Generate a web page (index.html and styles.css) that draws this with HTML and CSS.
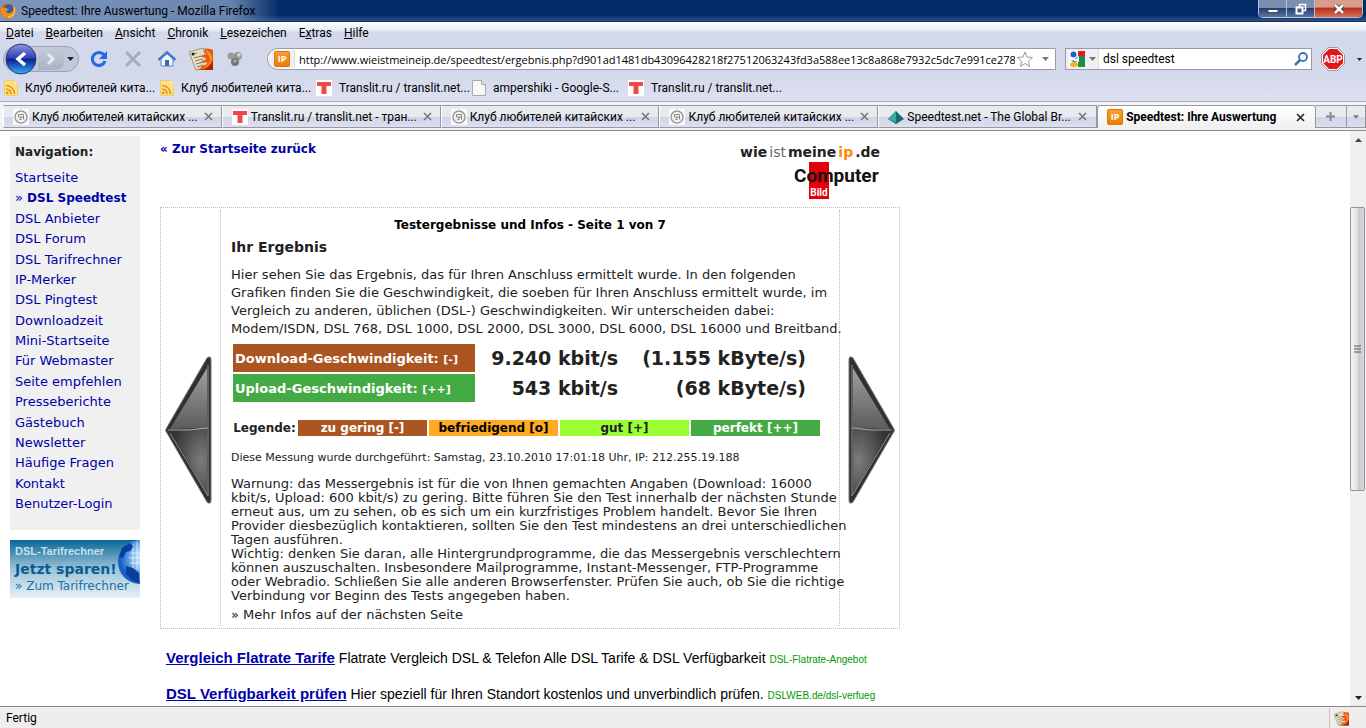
FILE: index.html
```html
<!DOCTYPE html>
<html lang="de">
<head>
  <meta charset="UTF-8">
  <meta name="viewport" content="width=device-width, initial-scale=1.0">
  <title>Speedtest: Ihre Auswertung</title>
  <link rel="stylesheet" href="styles.css">
</head>
<body>

  <!-- shared icons -->
  <svg class="defs" aria-hidden="true">
    <defs>
      <linearGradient id="backFill" x1="0" y1="0" x2="0" y2="1">
        <stop offset="0" stop-color="#8a97dc"/><stop offset=".48" stop-color="#2b3fb0"/>
        <stop offset=".5" stop-color="#0a1a8c"/><stop offset="1" stop-color="#35b4f4"/>
      </linearGradient>
      <linearGradient id="arrowTop" x1="0" y1="0" x2="0" y2="1">
        <stop offset="0" stop-color="#a0a0a0"/><stop offset="1" stop-color="#5c5c5c"/>
      </linearGradient>
      <radialGradient id="arrowBottom" cx=".85" cy=".5" r=".8">
        <stop offset="0" stop-color="#7c7c7c"/><stop offset="1" stop-color="#343434"/>
      </radialGradient>
      <radialGradient id="globe" cx=".65" cy=".4" r=".6">
        <stop offset="0" stop-color="#ffffff"/><stop offset=".5" stop-color="#8cc4f4"/><stop offset="1" stop-color="#1460c8"/>
      </radialGradient>
      <linearGradient id="ipFill" x1="0" y1="0" x2="0" y2="1">
        <stop offset="0" stop-color="#f8a030"/><stop offset="1" stop-color="#ee7c00"/>
      </linearGradient>
    </defs>
    <symbol id="i-rss" viewBox="0 0 14 16">
      <path d="M.5.5h10l3 3v12H.5z" fill="#fbe08a" stroke="#eccb68"/>
      <path d="M10.500.500v3h3z" fill="#fff4c8"/>
      <g fill="none" stroke="#e8940c" stroke-width="1.700"><path d="M2 5.500a8.500 8.500 0 0 1 8.500 8.500M2 9a5 5 0 0 1 5 5"/></g>
      <circle cx="3.200" cy="12.800" r="1.400" fill="#e8940c"/>
    </symbol>
    <symbol id="i-t" viewBox="0 0 16 16">
      <path d="M0 0h16v16H0z" fill="#fff"/><path d="M1 2h14v4h-4.500v8h-5V6H1z" fill="#f24848"/>
    </symbol>
    <symbol id="i-page" viewBox="0 0 14 16">
      <path d="M.5.5h9l4 4v11H.5z" fill="#f8f8f8" stroke="#a8a8a8"/><path d="M9.500.500v4h4" fill="#e4e4e4" stroke="#a8a8a8"/>
    </symbol>
    <symbol id="i-club" viewBox="0 0 16 16">
      <path d="M0 0h16v16H0z" fill="#fafafa"/>
      <circle cx="8" cy="8" r="6" fill="#f4f4f4" stroke="#999" stroke-width="1.500"/>
      <path d="M5.500 8V5.500h5v5M5.500 8h5M8 8v3M6 11l2-1" fill="none" stroke="#888"/>
    </symbol>
    <symbol id="i-ip" viewBox="0 0 16 16">
      <rect x=".5" y=".5" width="15" height="15" rx="1" fill="url(#ipFill)" stroke="#d97a10"/>
      <text x="8" y="11" text-anchor="middle" class="ip-text">IP</text>
    </symbol>
    <symbol id="i-x" viewBox="0 0 9 9"><path d="M1 1l7 7M8 1L1 8" stroke="currentColor" stroke-width="1.600"/></symbol>
    <symbol id="i-down" viewBox="0 0 7 4"><path d="M0 0h7L3.500 4z" fill="currentColor"/></symbol>
    <symbol id="i-fox" viewBox="0 0 24 24">
      <path d="M0 5L14 1l6 20-13 2z" fill="#e6dfc4" stroke="#a0957a"/>
      <path d="M4 7l4-1M5 11l8-2M6 14l8-2M7 17l8-2M8 20l7-2" stroke="#857a60"/>
      <circle cx="4" cy="7" r="1.500" fill="#222"/>
      <path d="M15 1c2 1 6 0 9 2v20H7c3 0 5-2 6-4 3 0 5-2 6-4-2 1-5 1-7-1 3 0 4-2 6-2-1-2-5-1-6-3 2-2 4 0 5-2-2-2-2-4-1-6z" fill="#e8590f"/>
      <path d="M17 2c2 3 6 4 6 9s-4 11-13 12c6-2 10-5 11-10 0-4-4-6-4-11z" fill="#fb9426"/>
      <path d="M9 23c7 0 13-4 15-10v10z" fill="#b3200c"/>
    </symbol>
    <symbol id="i-arrow" viewBox="0 0 47 148">
      <path d="M1 73L42 2Q46-1 46 4V144Q46 149 42 146L2 77Q0 75 1 73z" fill="#303030" stroke="#777"/>
      <path d="M5 73L42 12V72z" fill="url(#arrowTop)"/>
      <path d="M5 74L42 72V138z" fill="url(#arrowBottom)"/>
      <path d="M3 74q20 1 40-2" fill="none" stroke="#aaa"/>
      <path d="M5 77L43 140V9" fill="none" stroke="#909090"/>
    </symbol>
  </svg>

  <header class="titlebar">
    <svg class="app-icon" viewBox="0 0 16 16"><circle cx="8" cy="8" r="7.500" fill="#e45f0b"/><circle cx="8.500" cy="6.500" r="5" fill="#2c63ae"/><path d="M1 4c2 1 3 0 5 1l3 2-3 1c1 3 4 3 7 0l1-5c3 6 0 12-6 12S0 10 1 4z" fill="#f28a17"/><path d="M14 4c2 6-1 10-6 10" fill="none" stroke="#fbc63c" stroke-width="1.500"/></svg>
    <span class="title">Speedtest: Ihre Auswertung - Mozilla Firefox</span>
    <div class="window-buttons">
      <button class="win" aria-label="Minimieren"><svg width="12" height="10"><path d="M1 5.500h10v3H1z" fill="#fff" stroke="#445"/></svg></button>
      <button class="win" aria-label="Wiederherstellen"><svg width="12" height="12"><path d="M4.500 1.500h6v6h-6z" fill="none" stroke="#fff" stroke-width="1.500"/><path d="M1.500 4.500h6v6h-6z" fill="#445f8c" stroke="#fff" stroke-width="2"/></svg></button>
      <button class="win close" aria-label="Schließen"><svg width="12" height="10"><path d="M2 1l8 8M10 1L2 9" stroke="#432" stroke-width="4"/><path d="M2 1l8 8M10 1L2 9" stroke="#fff" stroke-width="2.500"/></svg></button>
    </div>
  </header>

  <nav class="menubar">
    <a href="#"><u>D</u>atei</a>
    <a href="#"><u>B</u>earbeiten</a>
    <a href="#"><u>A</u>nsicht</a>
    <a href="#"><u>C</u>hronik</a>
    <a href="#"><u>L</u>esezeichen</a>
    <a href="#">E<u>x</u>tras</a>
    <a href="#"><u>H</u>ilfe</a>
  </nav>

  <div class="toolbar">
    <div class="history">
      <button class="back" aria-label="Zurück"><svg width="32" height="32"><circle cx="16" cy="16" r="15" fill="url(#backFill)" stroke="#26357c"/><path d="M20 10l-7 6 7 6" fill="none" stroke="#fff" stroke-width="3.500"/></svg></button>
      <button class="forward" aria-label="Vor"><svg width="12" height="14"><path d="M3 2l5 5-5 5" fill="none" stroke="#e4e8f2" stroke-width="3"/></svg></button>
      <button class="recent" aria-label="Verlauf"><svg width="7" height="4"><use href="#i-down"/></svg></button>
    </div>
    <div class="tools">
      <button class="tool" aria-label="Neu laden"><svg width="18" height="18"><path d="M14 5A6.500 6.500 0 1 0 15 11" fill="none" stroke="#1d6ce0" stroke-width="3"/><path d="M17 1v8H9z" fill="#1d6ce0"/></svg></button>
      <button class="tool" aria-label="Stopp"><svg width="18" height="18"><path d="M2 2l14 14M16 2L2 16" stroke="#a9adb8" stroke-width="3"/></svg></button>
      <button class="tool" aria-label="Startseite"><svg width="20" height="20"><path d="M4 10v7h12v-7l-6-6z" fill="#f3f7fd" stroke="#5b82c4"/><path d="M1.500 11L10 3.500l8.500 7.500" fill="none" stroke="#3f78d0" stroke-width="2.500"/><path d="M8 11h4v6H8z" fill="#3a68b4"/></svg></button>
      <button class="tool" aria-label="Erweiterung"><svg width="24" height="24"><use href="#i-fox"/></svg></button>
      <button class="tool" aria-label="Kugeln"><svg width="18" height="18"><circle cx="5" cy="6" r="3.500" fill="#9b9b9b"/><circle cx="12" cy="6" r="4" fill="#929292"/><circle cx="9" cy="12" r="4" fill="#777"/><circle cx="13" cy="5" r="2" fill="#d4d4d4"/><circle cx="9" cy="11" r="1.500" fill="#b0b0b0"/></svg></button>
    </div>
    <div class="urlbar">
      <span class="identity"><svg width="16" height="16"><use href="#i-ip"/></svg></span>
      <input type="text" aria-label="Adresse" value="http://www.wieistmeineip.de/speedtest/ergebnis.php?d901ad1481db43096428218f27512063243fd3a588ee13c8a868e7932c5dc7e991ce2784">
      <button aria-label="Lesezeichen setzen"><svg width="16" height="16"><path d="M8 1l2 5 5.500.500-4 3.500 1 5.500L8 12.500 3.500 15.500l1-5.500-4-3.500L6 6z" fill="#fff" stroke="#999"/></svg></button>
      <button class="grey" aria-label="Adressliste"><svg width="7" height="4"><use href="#i-down"/></svg></button>
    </div>
    <div class="searchbar">
      <button class="engine grey" aria-label="Suchmaschine"><svg width="16" height="16"><path d="M0 0h16v16H0z" fill="#fff"/><path d="M9 0h7v5H9z" fill="#e21b1b"/><path d="M9 5h7v11H9z" fill="#169340"/><circle cx="4.500" cy="3.500" r="3" fill="#1e62c8"/><path d="M0 9q4 2 5-1l5-3v6H5z" fill="#1e62c8"/><path d="M3 6l4 2 3-3v6l-5-1z" fill="#fff"/><ellipse cx="5" cy="13.500" rx="4" ry="2.500" fill="#eeb21a"/></svg><svg width="7" height="4"><use href="#i-down"/></svg></button>
      <input type="text" aria-label="Suche" value="dsl speedtest">
      <button aria-label="Suchen"><svg width="14" height="14"><circle cx="9" cy="5" r="4" fill="#fff" stroke="#3a74b8" stroke-width="1.800"/><path d="M6 8l-5 5" stroke="#3a74b8" stroke-width="2.500"/></svg></button>
    </div>
    <button class="abp" aria-label="Adblock Plus"><svg width="24" height="24"><path d="M7.500.500h9l7 7v9l-7 7h-9l-7-7v-9z" fill="#fff" stroke="#999"/><path d="M8 2h8l6 6v8l-6 6H8l-6-6V8z" fill="#e4141c"/><text x="12" y="16" text-anchor="middle" class="abp-text">ABP</text></svg></button>
    <button class="abp-menu" aria-label="Adblock Menü"><svg width="5" height="3"><use href="#i-down"/></svg></button>
  </div>

  <nav class="bookmarks">
    <a href="#"><svg width="14" height="16"><use href="#i-rss"/></svg>Клуб любителей кита...</a>
    <a href="#"><svg width="14" height="16"><use href="#i-rss"/></svg>Клуб любителей кита...</a>
    <a href="#"><svg width="16" height="16"><use href="#i-t"/></svg>Translit.ru / translit.net...</a>
    <a href="#"><svg width="14" height="16"><use href="#i-page"/></svg>ampershiki - Google-S...</a>
    <a href="#"><svg width="16" height="16"><use href="#i-t"/></svg>Translit.ru / translit.net...</a>
  </nav>

  <div class="tabs">
    <div class="tab"><svg width="16" height="16"><use href="#i-club"/></svg><span>Клуб любителей китайских ...</span><button aria-label="Tab schließen"><svg width="9" height="9"><use href="#i-x"/></svg></button></div>
    <div class="tab"><svg width="16" height="16"><use href="#i-t"/></svg><span>Translit.ru / translit.net - тран...</span><button aria-label="Tab schließen"><svg width="9" height="9"><use href="#i-x"/></svg></button></div>
    <div class="tab"><svg width="16" height="16"><use href="#i-club"/></svg><span>Клуб любителей китайских ...</span><button aria-label="Tab schließen"><svg width="9" height="9"><use href="#i-x"/></svg></button></div>
    <div class="tab"><svg width="16" height="16"><use href="#i-club"/></svg><span>Клуб любителей китайских ...</span><button aria-label="Tab schließen"><svg width="9" height="9"><use href="#i-x"/></svg></button></div>
    <div class="tab"><svg width="16" height="16"><path d="M8 2l8 8-8 4-8-4z" fill="#126e6c"/><path d="M8 2v12l-8-4z" fill="#36a8a0"/><path d="M0 10l8 4 8-4-8 5z" fill="#0a4644"/></svg><span>Speedtest.net - The Global Br...</span><button aria-label="Tab schließen"><svg width="9" height="9"><use href="#i-x"/></svg></button></div>
    <div class="tab active"><svg width="16" height="16"><use href="#i-ip"/></svg><span>Speedtest: Ihre Auswertung</span><button aria-label="Tab schließen"><svg width="9" height="9"><use href="#i-x"/></svg></button></div>
    <button class="tab-button" aria-label="Neuer Tab"><svg width="9" height="9"><path d="M4.500 0v9M0 4.500h9" stroke="#888" stroke-width="2"/></svg></button>
    <button class="tab-button list" aria-label="Alle Tabs"><svg width="6" height="4"><use href="#i-down"/></svg></button>
  </div>

  <div class="viewport">
    <div class="page">
      <aside>
        <nav class="navigation">
          <h2>Navigation:</h2>
          <ul>
            <li><a href="#">Startseite</a></li>
            <li><a href="#">» <b>DSL Speedtest</b></a></li>
            <li><a href="#">DSL Anbieter</a></li>
            <li><a href="#">DSL Forum</a></li>
            <li><a href="#">DSL Tarifrechner</a></li>
            <li><a href="#">IP-Merker</a></li>
            <li><a href="#">DSL Pingtest</a></li>
            <li><a href="#">Downloadzeit</a></li>
            <li><a href="#">Mini-Startseite</a></li>
            <li><a href="#">Für Webmaster</a></li>
            <li><a href="#">Seite empfehlen</a></li>
            <li><a href="#">Presseberichte</a></li>
            <li><a href="#">Gästebuch</a></li>
            <li><a href="#">Newsletter</a></li>
            <li><a href="#">Häufige Fragen</a></li>
            <li><a href="#">Kontakt</a></li>
            <li><a href="#">Benutzer-Login</a></li>
          </ul>
        </nav>
        <a href="#" class="banner">
          <svg class="globe" width="22" height="46"><circle cx="22" cy="22" r="22" fill="url(#globe)"/><path d="M4 8l8-5 4 3-4 5-4 1-3 6-4-1zM8 26l7 2 6 5v10l-6-2-7-7z" fill="#0a3e9c"/><path d="M12 13h10M11 18h11M12 23h10M15 4v24M19 2v28" stroke="#fff" stroke-opacity=".6"/></svg>
          <span class="banner-small">DSL-Tarifrechner</span>
          <strong>Jetzt sparen!</strong>
          <span class="banner-link">» Zum Tarifrechner</span>
        </a>
      </aside>

      <main>
        <div class="top">
          <a href="#" class="home-link">« Zur Startseite zurück</a>
          <div class="logos">
            <div class="logo"><b>wie</b><span>ist</span><b>meine</b><i>ip</i><b>.de</b></div>
            <svg class="computerbild" width="86" height="38" role="img" aria-label="Computer Bild">
              <path d="M15 0h20v37H15z" fill="#e3000b"/>
              <text x="0" y="20" class="cb-computer">Computer</text>
              <text x="25" y="34" text-anchor="middle" class="cb-bild">Bild</text>
            </svg>
          </div>
        </div>

        <div class="result">
          <a href="#" class="pager" aria-label="Vorherige Seite"><svg width="47" height="148"><use href="#i-arrow"/></svg></a>
          <section class="content">
            <h3>Testergebnisse und Infos - Seite 1 von 7</h3>
            <h1>Ihr Ergebnis</h1>
            <p class="intro">Hier sehen Sie das Ergebnis, das für Ihren Anschluss ermittelt wurde. In den folgenden<br>
              Grafiken finden Sie die Geschwindigkeit, die soeben für Ihren Anschluss ermittelt wurde, im<br>
              Vergleich zu anderen, üblichen (DSL-) Geschwindigkeiten. Wir unterscheiden dabei:<br>
              Modem/ISDN, DSL 768, DSL 1000, DSL 2000, DSL 3000, DSL 6000, DSL 16000 und Breitband.</p>
            <table class="speeds">
              <tr>
                <th scope="row" class="low">Download-Geschwindigkeit: <small>[-]</small></th>
                <td class="kbit">9.240 kbit/s</td>
                <td class="kbyte">(1.155 kByte/s)</td>
              </tr>
              <tr>
                <th scope="row" class="perfect">Upload-Geschwindigkeit: <small>[++]</small></th>
                <td class="kbit">543 kbit/s</td>
                <td class="kbyte">(68 kByte/s)</td>
              </tr>
            </table>
            <table class="legend">
              <tr>
                <th scope="row">Legende:</th>
                <td class="low">zu gering [-]</td>
                <td class="fair">befriedigend [o]</td>
                <td class="good">gut [+]</td>
                <td class="perfect">perfekt [++]</td>
              </tr>
            </table>
            <p class="measured">Diese Messung wurde durchgeführt: Samstag, 23.10.2010 17:01:18 Uhr, IP: 212.255.19.188</p>
            <p class="warning">Warnung: das Messergebnis ist für die von Ihnen gemachten Angaben (Download: 16000<br>
              kbit/s, Upload: 600 kbit/s) zu gering. Bitte führen Sie den Test innerhalb der nächsten Stunde<br>
              erneut aus, um zu sehen, ob es sich um ein kurzfristiges Problem handelt. Bevor Sie Ihren<br>
              Provider diesbezüglich kontaktieren, sollten Sie den Test mindestens an drei unterschiedlichen<br>
              Tagen ausführen.<br>
              Wichtig: denken Sie daran, alle Hintergrundprogramme, die das Messergebnis verschlechtern<br>
              können auszuschalten. Insbesondere Mailprogramme, Instant-Messenger, FTP-Programme<br>
              oder Webradio. Schließen Sie alle anderen Browserfenster. Prüfen Sie auch, ob Sie die richtige<br>
              Verbindung vor Beginn des Tests angegeben haben.</p>
            <p class="more">» Mehr Infos auf der nächsten Seite</p>
          </section>
          <a href="#" class="pager next" aria-label="Nächste Seite"><svg width="47" height="148"><use href="#i-arrow"/></svg></a>
        </div>

        <div class="ads">
          <p><a href="#">Vergleich Flatrate Tarife</a> Flatrate Vergleich DSL &amp; Telefon Alle DSL Tarife &amp; DSL Verfügbarkeit <span>DSL-Flatrate-Angebot</span></p>
          <p><a href="#">DSL Verfügbarkeit prüfen</a> Hier speziell für Ihren Standort kostenlos und unverbindlich prüfen. <span>DSLWEB.de/dsl-verfueg</span></p>
        </div>
      </main>
    </div>

    <div class="scrollbar">
      <button aria-label="Nach oben"><svg width="7" height="4"><path d="M0 4h7L3.500 0z" fill="#444"/></svg></button>
      <div class="track"><div class="thumb"><svg width="8" height="8"><path d="M0 1h7M0 4h7M0 7h7" stroke="#555"/></svg></div></div>
      <button aria-label="Nach unten"><svg width="7" height="4"><use href="#i-down"/></svg></button>
    </div>
  </div>

  <footer class="statusbar">
    <span>Fertig</span>
    <div class="status-icon"><svg width="15" height="15"><use href="#i-fox"/></svg></div>
  </footer>

</body>
</html>
```
FILE: styles.css
```css
* {
  box-sizing: border-box;
}

body {
  margin: 0;
  height: 100vh;
  display: flex;
  flex-direction: column;
  overflow: hidden;
  font-family: Roboto, "Noto Sans", sans-serif;
  font-size: 12px;
  color: #000;
  background-color: #d3d8ea;
}

button {
  display: flex;
  align-items: center;
  justify-content: center;
  padding: 0;
  border: none;
  background: none;
  color: #222;
}

input {
  flex: 1;
  min-width: 0;
  padding: 0;
  border: none;
  outline: none;
  background: none;
  font: inherit;
  color: #000;
}

svg {
  display: block;
  flex: none;
}

.defs {
  position: absolute;
  width: 0;
  height: 0;
}

/* title bar */
.titlebar {
  flex: none;
  height: 22px;
  display: flex;
  align-items: flex-start;
  border-bottom: 1px solid #1c2f50;
  background: linear-gradient(90deg, #7f97bd 0, #6a84b0 230px, rgba(0, 42, 102, 0) 280px), linear-gradient(#012a66 70%, #2c5290);
}

.app-icon {
  width: 16px;
  height: 16px;
  margin-top: 3px;
}

.title {
  margin-left: 5px;
  line-height: 22px;
}

.window-buttons {
  display: flex;
  margin: 0 3px 0 auto;
  height: 18px;
  border: 1px solid #b5c0d4;
  border-top: none;
  border-radius: 0 0 5px 5px;
  overflow: hidden;
}

.win {
  width: 28px;
  border-right: 1px solid #b5c0d4;
  background: linear-gradient(#7d8fae 45%, #24406e 50%, #5a75a2);
}

.win.close {
  width: 47px;
  border-right: none;
  background: linear-gradient(#d89c8c 40%, #b8301a 50%, #d8705a);
}

/* menu, toolbar and bookmarks */
.menubar {
  flex: none;
  height: 21px;
  display: flex;
  align-items: center;
  gap: 12px;
  padding-left: 6px;
  background: linear-gradient(#ffffff, #e2e8f4 9px, #d3d8ea 10px);
}

.menubar a,
.bookmarks a {
  color: #000;
  text-decoration: none;
  white-space: nowrap;
}

.toolbar {
  flex: none;
  height: 32px;
  display: flex;
  align-items: center;
  padding: 0 3px;
}

.history {
  display: flex;
  align-items: center;
  width: 76px;
  height: 26px;
  border: 1px solid #9ba3b8;
  border-radius: 13px;
  background-color: #c2c8d8;
}

.back {
  width: 34px;
  height: 32px;
  flex: none;
}

.forward {
  width: 26px;
  height: 22px;
  border-radius: 0 8px 8px 0;
  background: linear-gradient(#c4cad8, #aab2c4);
}

.recent {
  width: 12px;
}

.tools {
  display: flex;
  margin-left: 3px;
}

.tool {
  width: 34px;
}

.urlbar,
.searchbar {
  display: flex;
  align-items: center;
  height: 22px;
  border: 1px solid #989ca8;
  background-color: #fff;
}

.urlbar {
  flex: 1;
  margin-left: 15px;
  border-radius: 11px 0 0 11px;
}

.urlbar input {
  font-family: "Open Sans", "Noto Sans", sans-serif;
  font-size: 11px;
}

.urlbar button {
  width: 20px;
}

.identity {
  padding: 1px 4px 1px 6px;
  margin-right: 4px;
  border-right: 1px solid #ddd;
  border-radius: 11px 0 0 11px;
  background-color: #f0f0f4;
}

.grey {
  color: #777;
}

.searchbar {
  width: 247px;
  margin-left: 9px;
}

.engine {
  gap: 4px;
  width: 33px;
  height: 20px;
  margin-right: 4px;
  border-right: 1px solid #ddd;
  background-color: #f0f0f4;
}

.searchbar button:last-child {
  width: 20px;
}

.abp {
  margin-left: 9px;
}

.abp-menu {
  width: 18px;
  padding-left: 11px;
}

.ip-text {
  font: bold 9px "Open Sans", sans-serif;
  fill: #fff;
}

.abp-text {
  font: bold 10px Roboto, sans-serif;
  fill: #fff;
}

.bookmarks {
  flex: none;
  height: 27px;
  display: flex;
  align-items: center;
  padding-left: 4px;
  border-bottom: 1px solid #a8adba;
  background: linear-gradient(#d3d8ea, #dde1f2);
}

.bookmarks a {
  display: flex;
  align-items: center;
  gap: 7px;
  width: 156px;
}

/* tabs */
.tabs {
  flex: none;
  height: 29px;
  display: flex;
  align-items: flex-start;
  padding: 3px 0 0 3px;
  border-bottom: 1px solid #888;
  background: linear-gradient(#f4f4f7 25px, #f0f0f0 25px);
}

.tab {
  flex: 1;
  min-width: 0;
  height: 23px;
  display: flex;
  align-items: center;
  padding: 0 5px 0 9px;
  gap: 3px;
  border: 1px solid #98999d;
  border-left-color: #fff;
  background: linear-gradient(#e9eaf0 50%, #cfd5e8 55%, #dce0f0);
  white-space: nowrap;
}

.tab span {
  flex: 1;
}

.tab button {
  width: 18px;
  color: #777;
}

.tab.active {
  border-color: #98999d;
  border-bottom: none;
  border-radius: 3px 3px 0 0;
  background: linear-gradient(#ffffff, #f0f0f0);
  font-weight: bold;
}

.tab.active button {
  color: #222;
}

.tab-button {
  width: 31px;
  height: 23px;
  border: 1px solid #98999d;
  border-left: none;
  background: linear-gradient(#e9eaf0 50%, #cfd5e8 55%, #dce0f0);
}

.tab-button.list {
  width: 19px;
  color: #777;
}

/* page */
.viewport {
  flex: 1;
  min-height: 0;
  display: flex;
  background-color: #fff;
}

.page {
  flex: 1;
  display: flex;
  gap: 20px;
  padding: 5px 10px 0;
  overflow: hidden;
  font-family: Verdana, "DejaVu Sans", sans-serif;
  font-size: 13px;
  color: #222;
}

.page a {
  color: #0000aa;
  text-decoration: none;
}

aside {
  flex: none;
  width: 130px;
}

.navigation {
  display: flex;
  flex-direction: column;
  height: 394px;
  padding: 7px 5px 17px;
  background-color: #f0f0f0;
  white-space: nowrap;
}

.navigation h2 {
  margin: 0 0 8px;
  font-size: 12px;
  line-height: 18px;
}

.navigation ul {
  flex: 1;
  display: flex;
  flex-direction: column;
  justify-content: space-between;
  margin: 0;
  padding: 0;
  list-style: none;
  line-height: 18px;
}

.navigation b {
  font-size: 12px;
}

.banner {
  position: relative;
  display: flex;
  flex-direction: column;
  height: 58px;
  margin-top: 10px;
  padding: 3px 5px;
  overflow: hidden;
  white-space: nowrap;
  background: linear-gradient(#0a6698, #9cc4d8 50%, #e8f0f5);
}

.banner .globe {
  position: absolute;
  right: 0;
  top: 0;
}

.banner-small {
  font: bold 11px/16px "Liberation Sans", Arial, sans-serif;
  color: #c4e0ee;
}

.banner strong {
  font-size: 14px;
  line-height: 20px;
  color: #0a5c94;
}

.banner .banner-link {
  font-size: 12px;
  line-height: 14px;
  color: #1a6ea8;
}

main {
  width: 740px;
}

.top {
  display: flex;
  justify-content: space-between;
  height: 71px;
  padding: 3px 20px 0 0;
}

.home-link {
  font-size: 12px;
  font-weight: bold;
  line-height: 20px;
}

.logos {
  display: flex;
  flex-direction: column;
  align-items: flex-end;
  padding-top: 3px;
}

.logo {
  display: flex;
  gap: 2px;
  font-family: "DejaVu Sans", sans-serif;
  font-size: 14px;
  line-height: 20px;
}

.logo span {
  color: #666;
}

.logo i {
  font-style: normal;
  font-weight: bold;
  color: #f80;
}

.cb-computer {
  font: bold 19px Roboto, sans-serif;
  fill: #111;
}

.cb-bild {
  font: bold 10px Roboto, sans-serif;
  fill: #fff;
}

.result {
  display: flex;
  height: 422px;
  padding: 2px 0;
  border: 1px dotted #bbb;
}

.pager {
  flex: 1;
  display: flex;
  align-items: center;
  padding: 24px 4px 0;
}

.pager.next {
  justify-content: flex-end;
}

.pager.next svg {
  transform: scaleX(-1);
}

.content {
  width: 620px;
  padding: 6px 10px 0;
  border: 1px dotted #bbb;
  border-width: 0 1px;
  white-space: nowrap;
}

.content h3 {
  margin: 0;
  font-size: 12px;
  line-height: 18px;
  text-align: center;
  color: #000;
}

.content h1 {
  margin: 4px 0 10px;
  font-size: 14px;
  line-height: 18px;
}

.content p {
  margin: 0;
}

.intro {
  line-height: 18px;
}

.speeds,
.legend {
  border-spacing: 2px;
}

.speeds {
  margin-top: 4px;
}

.speeds th {
  width: 242px;
  height: 28px;
  padding: 0 2px;
  text-align: left;
  font-size: 13px;
}

.speeds small {
  font-size: 11px;
}

.speeds td {
  padding: 0;
  font-size: 19px;
  line-height: 22px;
  font-weight: bold;
  text-align: right;
}

.kbit {
  width: 141px;
}

.kbyte {
  width: 186px;
}

.low {
  background-color: #aa5522;
  color: #fff;
}

.fair {
  background-color: #ffaa22;
  color: #000;
}

.good {
  background-color: #99ff33;
  color: #222;
}

.perfect {
  background-color: #44aa44;
  color: #fff;
}

.legend {
  margin-top: 14px;
  font-size: 12px;
  font-weight: bold;
  line-height: 16px;
  text-align: center;
}

.legend th {
  width: 63px;
  padding: 0;
}

.legend td {
  width: 129px;
  padding: 0;
}

.content .measured {
  margin: 11px 0 10px;
  font-size: 11px;
  line-height: 18px;
}

.warning {
  line-height: 14px;
}

.more {
  line-height: 24px;
}

.ads {
  width: 723px;
  padding: 19px 0 0 6px;
  font-family: "Liberation Sans", Arial, sans-serif;
  font-size: 14px;
  color: #000;
}

.ads p {
  margin: 0 0 16px;
  line-height: 20px;
  white-space: nowrap;
}

.ads a {
  font-size: 15px;
  font-weight: bold;
  line-height: 16px;
  text-decoration: underline;
}

.ads span {
  font-size: 10px;
  line-height: 16px;
  color: #009900;
}

/* scrollbar */
.scrollbar {
  flex: none;
  width: 16px;
  display: flex;
  flex-direction: column;
  background-color: #efefef;
}

.scrollbar button {
  height: 17px;
}

.track {
  flex: 1;
  padding-top: 59px;
}

.thumb {
  height: 284px;
  display: flex;
  align-items: center;
  justify-content: center;
  margin-right: 1px;
  border: 1px solid #929297;
  border-radius: 2px;
  background: linear-gradient(90deg, #f5f5f5, #e4e4e8 45%, #c8c9d0 60%, #d8d8de);
}

/* status bar */
.statusbar {
  flex: none;
  height: 22px;
  display: flex;
  align-items: center;
  justify-content: space-between;
  padding-left: 6px;
  border-top: 1px solid #888;
  background-color: #f0eded;
}

.status-icon {
  width: 37px;
  height: 20px;
  padding: 3px 4px;
  border-left: 1px solid #c4c0c0;
}
```
